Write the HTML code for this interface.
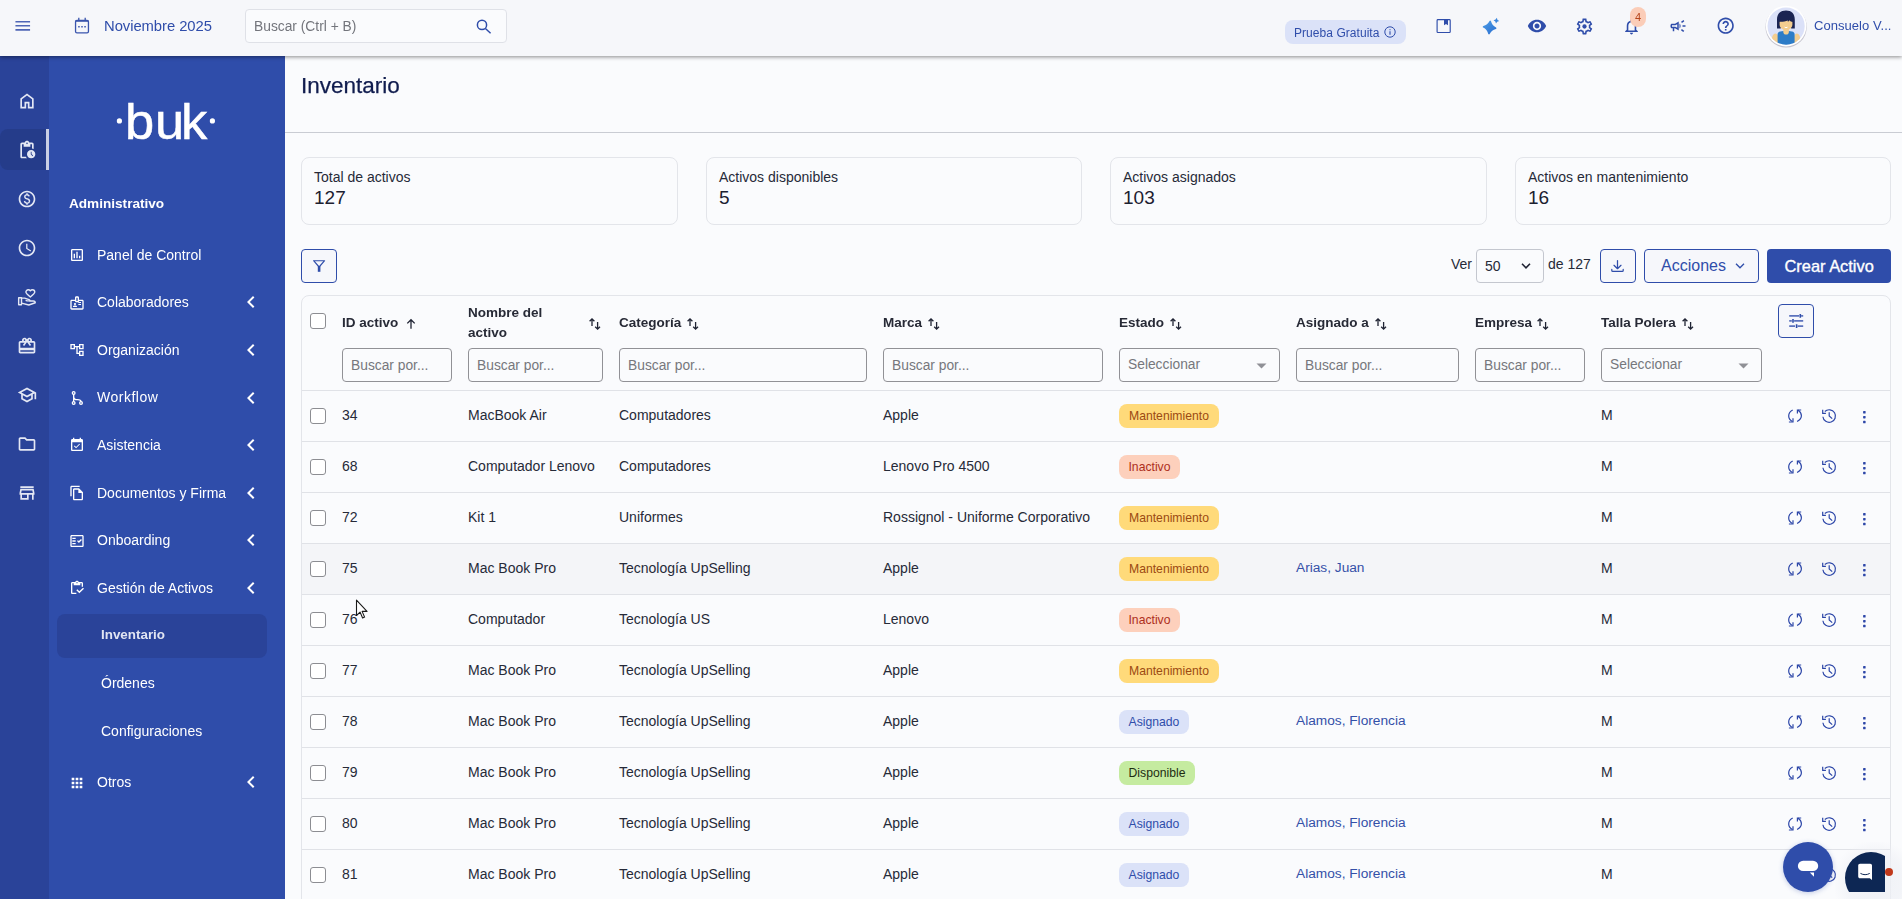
<!DOCTYPE html>
<html lang="es">
<head>
<meta charset="utf-8">
<title>Inventario</title>
<style>
*{box-sizing:border-box;margin:0;padding:0}
html,body{width:1902px;height:899px;overflow:hidden}
body{font-family:"Liberation Sans",sans-serif;background:#fafbfd;color:#1f2333;position:relative;font-size:14px}
.abs{position:absolute}
#top,#rail,#side,.th,.gs{will-change:transform}
svg{display:block}
#top{position:absolute;left:0;top:0;width:1902px;height:56px;background:#f6f7fa;box-shadow:0 1px 4px rgba(0,0,0,.45);z-index:30}
#top .t{position:absolute;white-space:nowrap;color:#2f4daa}
#rail{position:absolute;left:0;top:56px;width:49px;height:843px;background:#2a4399;z-index:10}
#side{position:absolute;left:49px;top:56px;width:236px;height:843px;background:#2f4daa;z-index:10;color:#fff}
#side .t{position:absolute;white-space:nowrap;color:#fff}
#main{position:absolute;left:285px;top:56px;width:1617px;height:843px;background:#fafbfd;overflow:hidden}
#main .t{position:absolute;white-space:nowrap}
.th{font-size:13.5px;line-height:18px;font-weight:700;color:#272a36}
.td{font-size:14px;line-height:18px;color:#262a38}
.ph{font-size:13.8px;line-height:18px;color:#76777c}
.inp{position:absolute;height:34px;border:1px solid #919196;border-radius:4px;background:#fafbfd}
.cb{position:absolute;width:16px;height:16px;border:1px solid #8c8d92;border-radius:3px;background:#fff}
.ln{position:absolute;height:1px;background:#e0e2e7}
.bd{position:absolute;height:24px;border-radius:8px;font-size:12.2px;line-height:24px;text-align:center;white-space:nowrap}
.btn{position:absolute;height:34px;border:1px solid #2f4daa;border-radius:4px;background:#f6f7fb}
</style>
</head>
<body>
<div id="top">
<svg class="abs" style="left:12.9px;top:16.2px" width="19.5" height="19.5" viewBox="0 0 24 24" fill="#4f66b5"><path d="M3 18h18v-2H3v2zm0-5h18v-2H3v2zm0-7v2h18V6H3z"/></svg>
<svg class="abs" style="left:73px;top:16px" width="18" height="19" viewBox="0 0 18 19" fill="none" stroke="#3a55ad" stroke-width="1.3"><rect x="2.550" y="4.300" width="12.900" height="12.500" rx="1.400"/><path d="M2.550 5h12.900" stroke-width="1.600"/><path d="M5.800 1.800v3M12.200 1.800v3"/><path d="M5.200 10.700h1.500M8.250 10.700h1.500M11.300 10.700h1.500" stroke-width="1.500"/></svg>
<div class="t" style="left:104px;top:17px;font-size:14.8px;line-height:18px;letter-spacing:-.05px">Noviembre 2025</div>
<div class="abs" style="left:245px;top:9px;width:262px;height:34px;border:1px solid #dfe1e7;border-radius:4px;background:#fafbfd"></div>
<div class="t" style="left:254px;top:18px;font-size:13.8px;line-height:18px;color:#73757c">Buscar (Ctrl + B)</div>
<svg class="abs" style="left:474px;top:16.500px" width="20" height="20" viewBox="0 0 20 20" fill="none" stroke="#2f4daa" stroke-width="1.500"><circle cx="8" cy="7.900" r="4.600"/><path d="M11.400 11.500l5.200 4.700"/></svg>
<div class="abs" style="left:1285px;top:20px;width:121px;height:24px;border-radius:8px;background:#dbe2f8"></div>
<div class="t" style="left:1294px;top:25.500px;font-size:12px;line-height:14px;letter-spacing:.05px">Prueba Gratuita</div>
<svg class="abs" style="left:1384px;top:26px" width="12" height="12" viewBox="0 0 12 12" fill="none" stroke="#2f4daa" stroke-width="1"><circle cx="6" cy="6" r="5.2"/><path d="M6 5.3v3.4M6 3.2v1.1" stroke-width="1.1"/></svg>
<svg class="abs" style="left:1435px;top:18px" width="17" height="16" viewBox="0 0 17 16" fill="none" stroke="#2f4daa" stroke-width="1.150"><rect x="2.100" y="1.600" width="13.100" height="12.900" rx=".8"/><path d="M9 1.600h4v5.700l-2-1.400-2 1.400z" fill="#2f4daa" stroke="none"/></svg>
<svg class="abs" style="left:1481px;top:16px" width="20" height="20" viewBox="0 0 20 20"><defs><linearGradient id="spg" x1="0" y1="0" x2="1" y2="1"><stop offset="0" stop-color="#4a9be6"/><stop offset="1" stop-color="#2a6fd0"/></linearGradient></defs><path d="M8.60 5.40Q10.25 9.85 14.70 11.50Q10.25 13.15 8.60 17.60Q6.95 13.15 2.50 11.50Q6.95 9.85 8.60 5.40Z" fill="url(#spg)" stroke="url(#spg)" stroke-width="1.600" stroke-linejoin="round" transform="rotate(6 8.600 11.500)"/><path d="M15.40 1.80Q15.84 4.26 18.30 4.70Q15.84 5.13 15.40 7.60Q14.97 5.13 12.50 4.70Q14.97 4.26 15.40 1.80Z" fill="#3b86dc" transform="rotate(8 15.400 4.700)"/></svg>
<svg class="abs" style="left:1527px;top:16px" width="20" height="20" viewBox="0 0 24 24" fill="#2f4daa"><path d="M12 4.500C7 4.500 2.730 7.610 1 12c1.730 4.390 6 7.500 11 7.500s9.270-3.110 11-7.500c-1.730-4.390-6-7.500-11-7.500zM12 17c-2.760 0-5-2.240-5-5s2.240-5 5-5 5 2.240 5 5-2.240 5-5 5zm0-8c-1.660 0-3 1.340-3 3s1.340 3 3 3 3-1.340 3-3-1.340-3-3-3z"/></svg>
<svg class="abs" style="left:1575px;top:16.500px" width="19" height="19" viewBox="0 0 24 24" fill="#2f4daa"><path d="M19.430 12.980c.04-.32.07-.64.07-.98 0-.34-.03-.66-.07-.98l2.110-1.650c.19-.15.24-.42.12-.64l-2-3.460c-.09-.16-.26-.25-.44-.25-.06 0-.12.010-.17.030l-2.490 1c-.52-.4-1.080-.73-1.690-.98l-.38-2.650C14.460 2.180 14.250 2 14 2h-4c-.25 0-.46.18-.49.42l-.38 2.650c-.61.25-1.170.59-1.690.98l-2.490-1c-.06-.02-.12-.03-.18-.03-.17 0-.34.09-.43.25l-2 3.460c-.13.22-.07.49.12.64l2.110 1.650c-.04.32-.07.65-.07.98 0 .33.03.66.07.98l-2.110 1.650c-.19.15-.24.42-.12.64l2 3.460c.09.16.26.25.44.25.06 0 .12-.010.17-.030l2.490-1c.52.4 1.080.73 1.690.98l.38 2.650c.03.24.24.42.49.42h4c.25 0 .46-.18.49-.42l.38-2.650c.61-.25 1.170-.59 1.690-.98l2.490 1c.06.02.12.03.18.03.17 0 .34-.09.43-.25l2-3.460c.12-.22.07-.49-.12-.64l-2.110-1.650zm-1.980-1.710c.04.31.05.52.05.73 0 .21-.02.43-.05.73l-.14 1.130.89.7 1.080.84-.7 1.210-1.270-.51-1.040-.42-.9.68c-.43.32-.84.56-1.250.73l-1.060.43-.16 1.130-.2 1.350h-1.400l-.19-1.350-.16-1.130-1.060-.43c-.43-.18-.83-.41-1.230-.71l-.91-.7-1.060.43-1.270.51-.7-1.210 1.080-.84.89-.7-.14-1.130c-.03-.31-.05-.54-.05-.74s.02-.43.05-.73l.14-1.130-.89-.7-1.080-.84.7-1.210 1.270.51 1.040.42.9-.68c.43-.32.84-.56 1.250-.73l1.060-.43.16-1.130.2-1.350h1.390l.19 1.350.16 1.130 1.060.43c.43.18.83.41 1.230.71l.91.7 1.060-.43 1.270-.51.7 1.210-1.070.85-.89.7.14 1.130z"/><circle cx="12" cy="12" r="2.700"/></svg>
<svg class="abs" style="left:1621.900px;top:16.600px" width="19" height="19" viewBox="0 0 24 24" fill="#2f4daa"><path d="M12 22c1.100 0 2-.9 2-2h-4c0 1.100.9 2 2 2zm6-6v-5c0-3.070-1.630-5.640-4.500-6.320V4c0-.83-.67-1.500-1.500-1.500s-1.500.67-1.500 1.500v.68C7.640 5.360 6 7.920 6 11v5l-2 2v1h16v-1l-2-2zm-2 1H8v-6c0-2.480 1.510-4.500 4-4.500s4 2.020 4 4.500v6z"/></svg>
<div class="abs" style="left:1630px;top:7px;width:16px;height:19.500px;border-radius:8px;background:#fbcdb8;color:#b5451b;font-size:11px;line-height:20px;text-align:center">4</div>
<svg class="abs" style="left:1669px;top:17px" width="18" height="18" viewBox="0 0 24 24" fill="#2f4daa"><path d="M18 11v2h4v-2h-4zm-2 6.610c.96.71 2.210 1.650 3.200 2.390.4-.53.8-1.070 1.200-1.600-.99-.74-2.240-1.680-3.200-2.400-.4.54-.8 1.080-1.200 1.610zM20.400 5.600c-.4-.53-.8-1.070-1.200-1.600-.99.74-2.240 1.680-3.200 2.400.4.53.8 1.070 1.200 1.600.96-.72 2.210-1.650 3.200-2.400zM4 9c-1.100 0-2 .9-2 2v2c0 1.100.9 2 2 2h1v4h2v-4h1l5 3V6L8 9H4zm5.030 1.710L11 9.530v4.940l-1.970-1.180-.48-.29H4v-2h4.550l.48-.29zM15.500 12c0-1.330-.58-2.530-1.500-3.350v6.690c.92-.81 1.500-2.010 1.500-3.340z"/></svg>
<svg class="abs" style="left:1715.800px;top:16.400px" width="19.400" height="19.400" viewBox="0 0 24 24" fill="#2f4daa"><path d="M11 18h2v-2h-2v2zm1-16C6.480 2 2 6.480 2 12s4.480 10 10 10 10-4.480 10-10S17.520 2 12 2zm0 18c-4.410 0-8-3.590-8-8s3.590-8 8-8 8 3.590 8 8-3.590 8-8 8zm0-14c-2.210 0-4 1.790-4 4h2c0-1.100.9-2 2-2s2 .9 2 2c0 2-3 1.750-3 5h2c0-2.250 3-2.500 3-5 0-2.210-1.790-4-4-4z"/></svg>
<svg class="abs" style="left:1762px;top:2px;overflow:visible" width="48" height="48" viewBox="0 0 48 48"><defs><clipPath id="avc"><circle cx="24.100" cy="24.100" r="18.600"/></clipPath></defs><circle cx="24.100" cy="25" r="20.600" fill="rgba(70,60,90,.28)"/><circle cx="24.100" cy="24.100" r="20.300" fill="#fff"/><circle cx="24.100" cy="24.100" r="18.600" fill="#dbe1f8"/><g clip-path="url(#avc)"><ellipse cx="13.300" cy="38" rx="3.600" ry="6.500" fill="#f3cd8f"/><ellipse cx="34.900" cy="38" rx="3.600" ry="6.500" fill="#f3cd8f"/><path d="M15.600 45V32.500c0-1.500 1-2.600 2.600-2.900l3.300-.5h5.200l3.300.5c1.600.3 2.600 1.400 2.600 2.900V45z" fill="#2d7cc7"/><path d="M21.300 26h5.600v4c0 1.600-1.200 2.600-2.800 2.600s-2.800-1-2.800-2.600z" fill="#f3cd8f"/><path d="M15 26.400V17.500c0-5.600 3.600-8.900 9-8.900s8.800 3.300 8.800 8.900v8.900h-3.600l-1-6h-8.500l-1 6z" fill="#1b2452"/><path d="M17.600 20c0-2 2.700-3.300 6.400-3.300s6.400 1.300 6.400 3.300v2.400c0 3.200-2.800 5.400-6.400 5.400s-6.400-2.200-6.400-5.400z" fill="#f3cd8f"/><path d="M16.500 19.800c0-5.200 3-7.700 7.500-7.700s7.500 2.500 7.500 7.700c-1.600.2-3.200-.3-4.100-1.500-.3.800-.9 1.300-1.600 1.500v-1.200c-2.200 1-5.600 1.400-9.300 1.200z" fill="#1b2452"/><path d="M22.300 24.500c1.100.7 2.500.7 3.600 0-.3 1-1 1.500-1.800 1.500s-1.500-.5-1.800-1.500z" fill="#fff"/></g></svg>
<div class="t" style="left:1814px;top:18px;font-size:13px;line-height:16px;letter-spacing:.05px">Consuelo V...</div>
</div>
<div id="rail">
<div class="abs" style="left:0;top:73px;width:49px;height:41px;background:#253c8a;border-radius:8px 0 0 8px"></div><div class="abs" style="left:46px;top:73px;width:3px;height:41px;background:#c9cfe4"></div>
<svg class="abs" style="left:16.85px;top:35.2px" width="20" height="20" viewBox="0 0 24 24" fill="#e4e8f4"><path d="M6 19h3v-6h6v6h3v-9l-6-4.500L6 10v9zm-2 2V9l8-6 8 6v12h-7v-6h-2v6H4z"/></svg>
<svg class="abs" style="left:17.0px;top:84.0px" width="20" height="20" viewBox="0 0 24 24" fill="#e4e8f4"><path d="M17 12c-2.760 0-5 2.240-5 5s2.240 5 5 5 5-2.240 5-5-2.240-5-5-5zm1.650 7.350L16.500 17.200V14h1v2.790l1.850 1.850-.7.71zM18 3h-3.180C14.400 1.840 13.300 1 12 1s-2.400.84-2.820 2H6c-1.100 0-2 .9-2 2v15c0 1.100.9 2 2 2h6.110c-.59-.57-1.070-1.250-1.420-2H6V5h2v3h8V5h2v5.080c.71.1 1.380.31 2 .6V5c0-1.100-.9-2-2-2zm-6 2c-.55 0-1-.45-1-1s.45-1 1-1 1 .45 1 1-.45 1-1 1z"/></svg>
<svg class="abs" style="left:17.0px;top:133.0px" width="20" height="20" viewBox="0 0 24 24" fill="#e4e8f4"><path d="M12 2C6.480 2 2 6.480 2 12s4.480 10 10 10 10-4.480 10-10S17.520 2 12 2zm0 18c-4.410 0-8-3.590-8-8s3.590-8 8-8 8 3.590 8 8-3.590 8-8 8zm.89-8.900c-1.780-.59-2.640-.96-2.640-1.900 0-1.020 1.110-1.390 1.810-1.390 1.310 0 1.790.99 1.900 1.340l1.580-.67c-.15-.44-.82-1.910-2.660-2.230V5h-1.750v1.260c-2.600.56-2.620 2.850-2.620 2.960 0 2.270 2.250 2.910 3.350 3.310 1.580.56 2.280 1.070 2.280 2.030 0 1.130-1.050 1.610-1.980 1.610-1.820 0-2.340-1.870-2.400-2.090l-1.660.67c.63 2.190 2.280 2.780 3.020 2.960V19h1.750v-1.240c.52-.09 3.020-.59 3.020-3.220.01-1.390-.6-2.610-3-3.440z"/></svg>
<svg class="abs" style="left:17.0px;top:182.0px" width="20" height="20" viewBox="0 0 24 24" fill="#e4e8f4"><path d="M11.990 2C6.470 2 2 6.480 2 12s4.470 10 9.990 10C17.520 22 22 17.520 22 12S17.520 2 11.990 2zM12 20c-4.420 0-8-3.580-8-8s3.580-8 8-8 8 3.580 8 8-3.580 8-8 8zm.5-13H11v6l5.250 3.150.75-1.230-4.500-2.670z"/></svg>
<svg class="abs" style="left:17.0px;top:231.0px" width="20" height="20" viewBox="0 0 24 24" fill="#e4e8f4"><g fill="none" stroke="#e4e8f4" stroke-width="1.700" stroke-linejoin="round"><path d="M16 4.600c.6-.8 1.500-1.300 2.500-1.300 1.600 0 2.800 1.200 2.800 2.800 0 1.800-2.200 3.500-5.300 5.900-3.100-2.400-5.300-4.100-5.300-5.900 0-1.600 1.200-2.800 2.800-2.800 1 0 1.900.5 2.500 1.300z"/><rect x="2" y="12.800" width="3.400" height="8.400"/><path d="M5.400 13.300h3.800l5.300 1.900c.7.25 1.100.8 1.100 1.500h4c1.300 0 2.300.9 2.300 2.200L14.200 21.600l-8.800-2.300"/><path d="M15.600 16.700h-3.400l-1.900-.7" stroke-width="1.500"/></g></svg>
<svg class="abs" style="left:17.0px;top:280.0px" width="20" height="20" viewBox="0 0 24 24" fill="#e4e8f4"><path d="M20 6h-2.180c.11-.31.18-.65.18-1 0-1.660-1.340-3-3-3-1.050 0-1.960.54-2.500 1.350l-.5.67-.5-.68C10.960 2.540 10.050 2 9 2 7.340 2 6 3.340 6 5c0 .35.07.69.18 1H4c-1.110 0-1.990.89-1.990 2L2 19c0 1.110.89 2 2 2h16c1.110 0 2-.89 2-2V8c0-1.110-.89-2-2-2zm-5-2c.55 0 1 .45 1 1s-.45 1-1 1-1-.45-1-1 .45-1 1-1zM9 4c.55 0 1 .45 1 1s-.45 1-1 1-1-.45-1-1 .45-1 1-1zm11 15H4v-2h16v2zm0-5H4V8h5.080L7 10.830 8.620 12 11 8.760l1-1.360 1 1.360L15.380 12 17 10.830 14.920 8H20v6z"/></svg>
<svg class="abs" style="left:17.0px;top:329.0px" width="20" height="20" viewBox="0 0 24 24" fill="#e4e8f4"><path d="M12 3L1 9l4 2.180v6L12 21l7-3.820v-6l2-1.090V17h2V9L12 3zm6.820 6L12 12.720 5.180 9 12 5.280 18.820 9zM17 15.990l-5 2.730-5-2.730v-3.720L12 15l5-2.730v3.720z"/></svg>
<svg class="abs" style="left:17.0px;top:378.0px" width="20" height="20" viewBox="0 0 24 24" fill="#e4e8f4"><path d="M9.170 6l2 2H20v10H4V6h5.170M10 4H4c-1.100 0-1.990.9-1.990 2L2 18c0 1.100.9 2 2 2h16c1.100 0 2-.9 2-2V8c0-1.100-.9-2-2-2h-8l-2-2z"/></svg>
<svg class="abs" style="left:17.0px;top:427.0px" width="20" height="20" viewBox="0 0 24 24" fill="#e4e8f4"><path d="M18.360 9l.6 3H5.040l.6-3h12.720M20 4H4v2h16V4zm0 3H4l-1 5v2h1v6h10v-6h4v6h2v-6h1v-2l-1-5zM6 18v-4h6v4H6z"/></svg>
</div>
<div id="side">
<svg class="abs" style="left:60px;top:36px;overflow:visible" width="112" height="56" viewBox="0 0 112 56"><circle cx="10.4" cy="28.9" r="2.6" fill="#fff"/><circle cx="103.4" cy="28.9" r="2.6" fill="#fff"/><text transform="scale(1.04 1)" x="15.27 44.19 69.26" y="47" font-family="Liberation Sans, sans-serif" font-size="50.5" fill="#fff" stroke="#fff" stroke-width=".5">buk</text></svg>
<div class="t" style="left:20px;top:139px;font-size:13.600px;line-height:18px;font-weight:700">Administrativo</div>
<svg class="abs" style="left:19.7px;top:191.3px" width="16" height="16" viewBox="0 0 24 24" fill="#fff"><path d="M19 3H5c-1.100 0-2 .9-2 2v14c0 1.100.9 2 2 2h14c1.100 0 2-.9 2-2V5c0-1.100-.9-2-2-2zm0 16H5V5h14v14zM7 10h2v7H7zm4-3h2v10h-2zm4 6h2v4h-2z"/></svg><div class="t" style="left:48px;top:189.8px;font-size:14px;line-height:18px">Panel de Control</div>
<svg class="abs" style="left:19.7px;top:238.7px" width="16" height="16" viewBox="0 0 24 24" fill="#fff"><path d="M14 13.500h4V15h-4zM14 10.500h4V12h-4zM20 7h-5V4c0-1.100-.9-2-2-2h-2c-1.100 0-2 .9-2 2v3H4c-1.100 0-2 .9-2 2v11c0 1.100.9 2 2 2h16c1.100 0 2-.9 2-2V9c0-1.100-.9-2-2-2zm-9-3h2v5h-2V4zm9 16H4V9h5c0 1.100.9 2 2 2h2c1.100 0 2-.9 2-2h5v11zM9 15c.83 0 1.500-.67 1.500-1.500S9.830 12 9 12s-1.500.67-1.500 1.500S8.170 15 9 15zm2.080 1.180C10.440 15.900 9.740 15.750 9 15.750s-1.440.15-2.080.43c-.56.24-.92.78-.92 1.390V18h6v-.43c0-.61-.36-1.150-.92-1.390z"/></svg><div class="t" style="left:48px;top:237.2px;font-size:14px;line-height:18px">Colaboradores</div><svg class="abs" style="left:189.9px;top:234.39999999999998px" width="24" height="24" viewBox="0 0 24 24" fill="#fff"><path d="M15.410 7.410L14 6l-6 6 6 6 1.410-1.410L10.830 12z"/></svg>
<svg class="abs" style="left:19.7px;top:286.3px" width="16" height="16" viewBox="0 0 24 24" fill="#fff"><path d="M22 11V3h-7v3H9V3H2v8h7V8h2v10h4v3h7v-8h-7v3h-2V8h2v3h7zM7 9H4V5h3v4zm10 6h3v4h-3v-4zm0-10h3v4h-3V5z"/></svg><div class="t" style="left:48px;top:284.8px;font-size:14px;line-height:18px">Organización</div><svg class="abs" style="left:189.9px;top:282px" width="24" height="24" viewBox="0 0 24 24" fill="#fff"><path d="M15.410 7.410L14 6l-6 6 6 6 1.410-1.410L10.830 12z"/></svg>
<svg class="abs" style="left:19.7px;top:333.8px" width="16" height="16" viewBox="0 0 24 24" fill="#fff"><g fill="none" stroke="#fff" stroke-width="2"><circle cx="7" cy="4.500" r="2"/><circle cx="7" cy="19.500" r="2"/><circle cx="18" cy="19.500" r="2"/><path d="M7 6.500v11M7 10c0 3 2 4.500 5.500 4.500S18 15.500 18 17.500"/></g></svg><div class="t" style="left:48px;top:332.3px;font-size:14px;line-height:18px;letter-spacing:.5px">Workflow</div><svg class="abs" style="left:189.9px;top:329.5px" width="24" height="24" viewBox="0 0 24 24" fill="#fff"><path d="M15.410 7.410L14 6l-6 6 6 6 1.410-1.410L10.830 12z"/></svg>
<svg class="abs" style="left:19.7px;top:381.4px" width="16" height="16" viewBox="0 0 24 24" fill="#fff"><path d="M16.530 11.060L15.470 10l-4.880 4.880-2.120-2.120-1.060 1.060L10.590 17l5.940-5.940zM19 3h-1V1h-2v2H8V1H6v2H5c-1.110 0-1.990.9-1.990 2L3 19c0 1.100.89 2 2 2h14c1.100 0 2-.9 2-2V5c0-1.100-.9-2-2-2zm0 16H5V8h14v11z"/></svg><div class="t" style="left:48px;top:379.9px;font-size:14px;line-height:18px">Asistencia</div><svg class="abs" style="left:189.9px;top:377.1px" width="24" height="24" viewBox="0 0 24 24" fill="#fff"><path d="M15.410 7.410L14 6l-6 6 6 6 1.410-1.410L10.830 12z"/></svg>
<svg class="abs" style="left:19.7px;top:429.1px" width="16" height="16" viewBox="0 0 24 24" fill="#fff"><path d="M16 1H4c-1.100 0-2 .9-2 2v14h2V3h12V1zm-1 4H8c-1.100 0-1.990.9-1.990 2L6 21c0 1.100.89 2 1.990 2H19c1.100 0 2-.9 2-2V11l-6-6zM8 21V7h6v5h5v9H8z"/></svg><div class="t" style="left:48px;top:427.6px;font-size:14px;line-height:18px">Documentos y Firma</div><svg class="abs" style="left:189.9px;top:424.8px" width="24" height="24" viewBox="0 0 24 24" fill="#fff"><path d="M15.410 7.410L14 6l-6 6 6 6 1.410-1.410L10.830 12z"/></svg>
<svg class="abs" style="left:19.7px;top:476.6px" width="16" height="16" viewBox="0 0 24 24" fill="#fff"><path d="M20 3H4c-1.100 0-2 .9-2 2v14c0 1.100.9 2 2 2h16c1.100 0 2-.9 2-2V5c0-1.100-.9-2-2-2zm0 16H4V5h16v14z"/><path d="M19.410 10.420L17.990 9l-3.170 3.170-1.410-1.420L12 12.160 14.820 15z"/><path d="M5 7h5v2H5zM5 11h5v2H5zM5 15h5v2H5z"/></svg><div class="t" style="left:48px;top:475.1px;font-size:14px;line-height:18px">Onboarding</div><svg class="abs" style="left:189.9px;top:472.29999999999995px" width="24" height="24" viewBox="0 0 24 24" fill="#fff"><path d="M15.410 7.410L14 6l-6 6 6 6 1.410-1.410L10.830 12z"/></svg>
<svg class="abs" style="left:19.7px;top:524.3px" width="16" height="16" viewBox="0 0 24 24" fill="#fff"><path d="M5 5h2v3h10V5h2v5h2V5c0-1.100-.9-2-2-2h-4.180C14.400 1.840 13.300 1 12 1S9.600 1.840 9.180 3H5c-1.100 0-2 .9-2 2v14c0 1.100.9 2 2 2h6v-2H5V5zm7-2c.55 0 1 .45 1 1s-.45 1-1 1-1-.45-1-1 .45-1 1-1z"/><path d="M21 11.500l-5.510 5.520-3.010-3.020-1.500 1.500 4.510 4.500 7-7z"/></svg><div class="t" style="left:48px;top:522.8px;font-size:14px;line-height:18px">Gestión de Activos</div><svg class="abs" style="left:189.9px;top:520px" width="24" height="24" viewBox="0 0 24 24" fill="#fff"><path d="M15.410 7.410L14 6l-6 6 6 6 1.410-1.410L10.830 12z"/></svg>
<svg class="abs" style="left:19.7px;top:718.6px" width="16" height="16" viewBox="0 0 24 24" fill="#fff"><path d="M4 8h4V4H4v4zm6 12h4v-4h-4v4zm-6 0h4v-4H4v4zm0-6h4v-4H4v4zm6 0h4v-4h-4v4zm6-10v4h4V4h-4zm-6 4h4V4h-4v4zm6 6h4v-4h-4v4zm0 6h4v-4h-4v4z"/></svg><div class="t" style="left:48px;top:717.1px;font-size:14px;line-height:18px">Otros</div><svg class="abs" style="left:189.9px;top:714.3px" width="24" height="24" viewBox="0 0 24 24" fill="#fff"><path d="M15.410 7.410L14 6l-6 6 6 6 1.410-1.410L10.830 12z"/></svg>
<div class="abs" style="left:8px;top:558px;width:210px;height:44px;border-radius:8px;background:#2a4399"></div>
<div class="t" style="left:52px;top:569.500px;font-size:13.400px;line-height:18px;font-weight:700;color:#e1e5f2">Inventario</div>
<div class="t" style="left:52px;top:617.500px;font-size:14px;line-height:18px">Órdenes</div>
<div class="t" style="left:52px;top:666px;font-size:14px;line-height:18px">Configuraciones</div>
</div>
<div id="main">
<div class="t gs" style="left:16px;top:16px;font-size:22.5px;line-height:28px;color:#101c4e;-webkit-text-stroke:.25px #101c4e">Inventario</div>
<div class="abs" style="left:0;top:76px;width:1617px;height:1px;background:#c9ccd3"></div>
<div class="abs" style="left:16px;top:101px;width:376.5px;height:68px;border:1px solid #e3e5ea;border-radius:8px;background:#fafbfd"></div><div class="t td" style="left:29px;top:112px">Total de activos</div><div class="t" style="left:29px;top:130.5px;font-size:19px;line-height:22px;color:#1c2030">127</div>
<div class="abs" style="left:420.5px;top:101px;width:376.5px;height:68px;border:1px solid #e3e5ea;border-radius:8px;background:#fafbfd"></div><div class="t td" style="left:434px;top:112px">Activos disponibles</div><div class="t" style="left:434px;top:130.5px;font-size:19px;line-height:22px;color:#1c2030">5</div>
<div class="abs" style="left:825px;top:101px;width:376.5px;height:68px;border:1px solid #e3e5ea;border-radius:8px;background:#fafbfd"></div><div class="t td" style="left:838px;top:112px">Activos asignados</div><div class="t" style="left:838px;top:130.5px;font-size:19px;line-height:22px;color:#1c2030">103</div>
<div class="abs" style="left:1229.5px;top:101px;width:376.5px;height:68px;border:1px solid #e3e5ea;border-radius:8px;background:#fafbfd"></div><div class="t td" style="left:1243px;top:112px">Activos en mantenimiento</div><div class="t" style="left:1243px;top:130.5px;font-size:19px;line-height:22px;color:#1c2030">16</div>
<div class="btn" style="left:16px;top:193px;width:36px"></div><svg class="abs" style="left:26px;top:202px" width="18" height="16" viewBox="0 0 18 16" fill="none" stroke="#2f4daa" stroke-width="1.5" stroke-linejoin="round"><path d="M2.600 2.700h11l-5.500 6.300z" stroke-width="1.150"/><rect x="6.800" y="8.200" width="2.600" height="5.600" fill="#2f4daa" stroke="none"/></svg>
<div class="t td" style="left:1166px;top:199.4px">Ver</div><div class="abs" style="left:1191px;top:193px;width:68px;height:34px;border:1px solid #c4c7cf;border-radius:4px;background:#fafbfd"></div><div class="t td" style="left:1200px;top:201px">50</div><svg class="abs" style="left:1235px;top:206px" width="12" height="8" viewBox="0 0 12 8" fill="none" stroke="#1f2333" stroke-width="1.6"><path d="M2 1.800l4 4 4-4"/></svg><div class="t td" style="left:1263px;top:199.4px">de 127</div>
<div class="btn" style="left:1315px;top:193px;width:36px"></div><svg class="abs" style="left:1325px;top:202px" width="16" height="16" viewBox="0 0 16 16" fill="none" stroke="#2f4daa" stroke-width="1.25" stroke-linecap="round" stroke-linejoin="round"><path d="M7.500 2.500v8M4 7.300l3.500 3.400L11 7.300M1.800 11.400v1c0 .6.400 1 1 1h9.400c.6 0 1-.4 1-1v-1"/></svg>
<div class="btn" style="left:1359px;top:193px;width:115px"></div><div class="t" style="left:1376px;top:200px;font-size:16px;line-height:20px;color:#2f4daa">Acciones</div><svg class="abs" style="left:1449px;top:206px" width="12" height="8" viewBox="0 0 12 8" fill="none" stroke="#2f4daa" stroke-width="1.3"><path d="M2 1.800l4 4 4-4"/></svg>
<div class="abs" style="left:1482px;top:193px;width:124px;height:34px;border-radius:4px;background:#2f4daa"></div><div class="t" style="left:1499.5px;top:200px;font-size:16.4px;line-height:20px;color:#fff;-webkit-text-stroke:.35px #fff">Crear Activo</div>
<div class="abs" style="left:16px;top:239px;width:1590px;height:700px;border:1px solid #e3e5ea;border-radius:8px;background:#fafbfd"></div>
<div class="abs" style="left:17px;top:488px;width:1588px;height:50px;background:#f4f5f8"></div>
<div class="ln" style="left:17px;top:334px;width:1588px"></div><div class="ln" style="left:17px;top:385px;width:1588px"></div><div class="ln" style="left:17px;top:436px;width:1588px"></div><div class="ln" style="left:17px;top:487px;width:1588px"></div><div class="ln" style="left:17px;top:538px;width:1588px"></div><div class="ln" style="left:17px;top:589px;width:1588px"></div><div class="ln" style="left:17px;top:640px;width:1588px"></div><div class="ln" style="left:17px;top:691px;width:1588px"></div><div class="ln" style="left:17px;top:742px;width:1588px"></div><div class="ln" style="left:17px;top:793px;width:1588px"></div>
<div class="cb" style="left:25px;top:257px"></div><div class="t th" style="left:57px;top:257.5px">ID activo</div><svg class="abs" style="left:119.5px;top:261px" width="12" height="13" viewBox="0 0 12 13" fill="none" stroke="#1f2333" stroke-width="1.3"><path d="M6 11.800V2.800M2.300 6.400L6 2.700l3.700 3.700"/></svg><div class="t th" style="left:183px;top:247.5px">Nombre del</div><div class="t th" style="left:183px;top:267.5px">activo</div><svg class="abs" style="left:303px;top:261px" width="14" height="14" viewBox="0 0 14 14" fill="none" stroke="#1f2333" stroke-width="1.3"><path d="M4 9V2M1.600 4.300L4 1.900l2.400 2.400M9.600 5v7M7.200 9.700l2.400 2.400 2.400-2.400"/></svg><div class="t th" style="left:334px;top:257.5px">Categoría</div><svg class="abs" style="left:401px;top:261px" width="14" height="14" viewBox="0 0 14 14" fill="none" stroke="#1f2333" stroke-width="1.3"><path d="M4 9V2M1.600 4.300L4 1.900l2.400 2.400M9.600 5v7M7.200 9.700l2.400 2.400 2.400-2.400"/></svg><div class="t th" style="left:598px;top:257.5px">Marca</div><svg class="abs" style="left:641.5px;top:261px" width="14" height="14" viewBox="0 0 14 14" fill="none" stroke="#1f2333" stroke-width="1.3"><path d="M4 9V2M1.600 4.300L4 1.900l2.400 2.400M9.600 5v7M7.200 9.700l2.400 2.400 2.400-2.400"/></svg><div class="t th" style="left:834px;top:257.5px">Estado</div><svg class="abs" style="left:884px;top:261px" width="14" height="14" viewBox="0 0 14 14" fill="none" stroke="#1f2333" stroke-width="1.3"><path d="M4 9V2M1.600 4.300L4 1.900l2.400 2.400M9.600 5v7M7.200 9.700l2.400 2.400 2.400-2.400"/></svg><div class="t th" style="left:1011px;top:257.5px">Asignado a</div><svg class="abs" style="left:1089px;top:261px" width="14" height="14" viewBox="0 0 14 14" fill="none" stroke="#1f2333" stroke-width="1.3"><path d="M4 9V2M1.600 4.300L4 1.900l2.400 2.400M9.600 5v7M7.200 9.700l2.400 2.400 2.400-2.400"/></svg><div class="t th" style="left:1190px;top:257.5px">Empresa</div><svg class="abs" style="left:1251px;top:261px" width="14" height="14" viewBox="0 0 14 14" fill="none" stroke="#1f2333" stroke-width="1.3"><path d="M4 9V2M1.600 4.300L4 1.900l2.400 2.400M9.600 5v7M7.200 9.700l2.400 2.400 2.400-2.400"/></svg><div class="t th" style="left:1316px;top:257.5px">Talla Polera</div><svg class="abs" style="left:1396px;top:261px" width="14" height="14" viewBox="0 0 14 14" fill="none" stroke="#1f2333" stroke-width="1.3"><path d="M4 9V2M1.600 4.300L4 1.900l2.400 2.400M9.600 5v7M7.200 9.700l2.400 2.400 2.400-2.400"/></svg>
<div class="btn" style="left:1493px;top:248px;width:36px"></div><svg class="abs" style="left:1502px;top:256px" width="18" height="18" viewBox="0 0 18 18" fill="none" stroke="#2f4daa" stroke-width="1.6"><path d="M2.200 3.900h9.900M14.100 3.900h2.100M2.200 8.900h2.600M7.100 8.900h9.100M2.200 14.100h5.800M10.600 14.100h5.600" stroke="#5b72bd"/><path d="M13.300 2.100v3.600M6 7.100v3.700M9.600 12.200v3.700"/></svg>
<div class="inp" style="left:57px;top:292px;width:110px"></div><div class="t ph" style="left:66px;top:300.5px">Buscar por...</div><div class="inp" style="left:183px;top:292px;width:135px"></div><div class="t ph" style="left:192px;top:300.5px">Buscar por...</div><div class="inp" style="left:334px;top:292px;width:248px"></div><div class="t ph" style="left:343px;top:300.5px">Buscar por...</div><div class="inp" style="left:598px;top:292px;width:220px"></div><div class="t ph" style="left:607px;top:300.5px">Buscar por...</div><div class="inp" style="left:834px;top:292px;width:161px"></div><div class="t ph" style="left:843px;top:299.5px">Seleccionar</div><svg class="abs" style="left:971px;top:306.5px" width="11" height="6" viewBox="0 0 11 6" fill="#8f9096"><path d="M.5.500h10l-5 5z"/></svg><div class="inp" style="left:1011px;top:292px;width:163px"></div><div class="t ph" style="left:1020px;top:300.5px">Buscar por...</div><div class="inp" style="left:1190px;top:292px;width:110px"></div><div class="t ph" style="left:1199px;top:300.5px">Buscar por...</div><div class="inp" style="left:1316px;top:292px;width:161px"></div><div class="t ph" style="left:1325px;top:299.5px">Seleccionar</div><svg class="abs" style="left:1453px;top:306.5px" width="11" height="6" viewBox="0 0 11 6" fill="#8f9096"><path d="M.5.500h10l-5 5z"/></svg>
<div class="cb" style="left:25px;top:351.8px"></div><div class="t td" style="left:57px;top:349.9px">34</div><div class="t td" style="left:183px;top:349.9px">MacBook Air</div><div class="t td" style="left:334px;top:349.9px">Computadores</div><div class="t td" style="left:598px;top:349.9px">Apple</div><div class="bd" style="left:834px;top:347.5px;width:100px;background:#ffda7a;color:#9c4a12">Mantenimiento</div><div class="t td" style="left:1316px;top:349.9px">M</div><svg class="abs" style="left:1502px;top:352px" width="16" height="16" viewBox="0 0 16 16"><g fill="none" stroke="#2c46a8" stroke-width="1.2"><path d="M5.700 2.100C3 3.600 1.700 5.600 1.700 7.900c0 2.100 1.200 4.100 3.700 5.700"/><path d="M1.900 14h4.100v-3.700"/><path d="M10.100 13.500c2.900-1.500 4.300-3.500 4.300-5.700 0-2.200-1.200-4.100-3.600-5.700"/><path d="M14.200 2h-3.800v3.600"/></g></svg><svg class="abs" style="left:1535px;top:352px" width="18" height="16" viewBox="0 0 18 16"><g fill="none" stroke="#2c46a8" stroke-width="1.2"><path d="M2.900 8.700a6.300 6.300 0 1 0 1.900-5.200"/><path d="M2.700 1.800v3.500h3.200"/><path d="M9.200 4.300v3.600l3 2.700"/></g></svg><svg class="abs" style="left:1577.7px;top:354.6px" width="3" height="13" viewBox="0 0 3 13"><g fill="#2c46a8"><rect x=".1" y="0" width="2.500" height="2.500" rx=".6"/><rect x=".1" y="4.900" width="2.500" height="2.500" rx=".6"/><rect x=".1" y="9.800" width="2.500" height="2.500" rx=".6"/></g></svg>
<div class="cb" style="left:25px;top:402.8px"></div><div class="t td" style="left:57px;top:400.9px">68</div><div class="t td" style="left:183px;top:400.9px">Computador Lenovo</div><div class="t td" style="left:334px;top:400.9px">Computadores</div><div class="t td" style="left:598px;top:400.9px">Lenovo Pro 4500</div><div class="bd" style="left:834px;top:398.5px;width:61px;background:#fdd0bc;color:#ad2f1c">Inactivo</div><div class="t td" style="left:1316px;top:400.9px">M</div><svg class="abs" style="left:1502px;top:403px" width="16" height="16" viewBox="0 0 16 16"><g fill="none" stroke="#2c46a8" stroke-width="1.2"><path d="M5.700 2.100C3 3.600 1.700 5.600 1.700 7.900c0 2.100 1.200 4.100 3.700 5.700"/><path d="M1.900 14h4.100v-3.700"/><path d="M10.100 13.500c2.900-1.500 4.300-3.500 4.300-5.700 0-2.200-1.200-4.100-3.600-5.700"/><path d="M14.200 2h-3.800v3.600"/></g></svg><svg class="abs" style="left:1535px;top:403px" width="18" height="16" viewBox="0 0 18 16"><g fill="none" stroke="#2c46a8" stroke-width="1.2"><path d="M2.900 8.700a6.300 6.300 0 1 0 1.900-5.200"/><path d="M2.700 1.800v3.500h3.200"/><path d="M9.200 4.300v3.600l3 2.700"/></g></svg><svg class="abs" style="left:1577.7px;top:405.6px" width="3" height="13" viewBox="0 0 3 13"><g fill="#2c46a8"><rect x=".1" y="0" width="2.500" height="2.500" rx=".6"/><rect x=".1" y="4.900" width="2.500" height="2.500" rx=".6"/><rect x=".1" y="9.800" width="2.500" height="2.500" rx=".6"/></g></svg>
<div class="cb" style="left:25px;top:453.8px"></div><div class="t td" style="left:57px;top:451.9px">72</div><div class="t td" style="left:183px;top:451.9px">Kit 1</div><div class="t td" style="left:334px;top:451.9px">Uniformes</div><div class="t td" style="left:598px;top:451.9px">Rossignol - Uniforme Corporativo</div><div class="bd" style="left:834px;top:449.5px;width:100px;background:#ffda7a;color:#9c4a12">Mantenimiento</div><div class="t td" style="left:1316px;top:451.9px">M</div><svg class="abs" style="left:1502px;top:454px" width="16" height="16" viewBox="0 0 16 16"><g fill="none" stroke="#2c46a8" stroke-width="1.2"><path d="M5.700 2.100C3 3.600 1.700 5.600 1.700 7.900c0 2.100 1.200 4.100 3.700 5.700"/><path d="M1.900 14h4.100v-3.700"/><path d="M10.100 13.500c2.900-1.500 4.300-3.500 4.300-5.700 0-2.200-1.200-4.100-3.600-5.700"/><path d="M14.200 2h-3.800v3.600"/></g></svg><svg class="abs" style="left:1535px;top:454px" width="18" height="16" viewBox="0 0 18 16"><g fill="none" stroke="#2c46a8" stroke-width="1.2"><path d="M2.900 8.700a6.300 6.300 0 1 0 1.900-5.200"/><path d="M2.700 1.800v3.500h3.200"/><path d="M9.200 4.300v3.600l3 2.700"/></g></svg><svg class="abs" style="left:1577.7px;top:456.6px" width="3" height="13" viewBox="0 0 3 13"><g fill="#2c46a8"><rect x=".1" y="0" width="2.500" height="2.500" rx=".6"/><rect x=".1" y="4.900" width="2.500" height="2.500" rx=".6"/><rect x=".1" y="9.800" width="2.500" height="2.500" rx=".6"/></g></svg>
<div class="cb" style="left:25px;top:504.8px"></div><div class="t td" style="left:57px;top:502.9px">75</div><div class="t td" style="left:183px;top:502.9px">Mac Book Pro</div><div class="t td" style="left:334px;top:502.9px">Tecnología UpSelling</div><div class="t td" style="left:598px;top:502.9px">Apple</div><div class="bd" style="left:834px;top:500.5px;width:100px;background:#ffda7a;color:#9c4a12">Mantenimiento</div><div class="t td" style="left:1011px;top:502.9px;color:#3450a8;font-size:13.7px">Arias, Juan</div><div class="t td" style="left:1316px;top:502.9px">M</div><svg class="abs" style="left:1502px;top:505px" width="16" height="16" viewBox="0 0 16 16"><g fill="none" stroke="#2c46a8" stroke-width="1.2"><path d="M5.700 2.100C3 3.600 1.700 5.600 1.700 7.900c0 2.100 1.200 4.100 3.700 5.700"/><path d="M1.900 14h4.100v-3.700"/><path d="M10.100 13.500c2.900-1.500 4.300-3.500 4.300-5.700 0-2.200-1.200-4.100-3.600-5.700"/><path d="M14.200 2h-3.800v3.600"/></g></svg><svg class="abs" style="left:1535px;top:505px" width="18" height="16" viewBox="0 0 18 16"><g fill="none" stroke="#2c46a8" stroke-width="1.2"><path d="M2.900 8.700a6.300 6.300 0 1 0 1.900-5.200"/><path d="M2.700 1.800v3.500h3.200"/><path d="M9.200 4.300v3.600l3 2.700"/></g></svg><svg class="abs" style="left:1577.7px;top:507.6px" width="3" height="13" viewBox="0 0 3 13"><g fill="#2c46a8"><rect x=".1" y="0" width="2.500" height="2.500" rx=".6"/><rect x=".1" y="4.900" width="2.500" height="2.500" rx=".6"/><rect x=".1" y="9.800" width="2.500" height="2.500" rx=".6"/></g></svg>
<div class="cb" style="left:25px;top:555.8px"></div><div class="t td" style="left:57px;top:553.9px">76</div><div class="t td" style="left:183px;top:553.9px">Computador</div><div class="t td" style="left:334px;top:553.9px">Tecnología US</div><div class="t td" style="left:598px;top:553.9px">Lenovo</div><div class="bd" style="left:834px;top:551.5px;width:61px;background:#fdd0bc;color:#ad2f1c">Inactivo</div><div class="t td" style="left:1316px;top:553.9px">M</div><svg class="abs" style="left:1502px;top:556px" width="16" height="16" viewBox="0 0 16 16"><g fill="none" stroke="#2c46a8" stroke-width="1.2"><path d="M5.700 2.100C3 3.600 1.700 5.600 1.700 7.900c0 2.100 1.200 4.100 3.700 5.700"/><path d="M1.900 14h4.100v-3.700"/><path d="M10.100 13.500c2.900-1.500 4.300-3.500 4.300-5.700 0-2.200-1.200-4.100-3.600-5.700"/><path d="M14.200 2h-3.800v3.600"/></g></svg><svg class="abs" style="left:1535px;top:556px" width="18" height="16" viewBox="0 0 18 16"><g fill="none" stroke="#2c46a8" stroke-width="1.2"><path d="M2.900 8.700a6.300 6.300 0 1 0 1.900-5.200"/><path d="M2.700 1.800v3.500h3.200"/><path d="M9.200 4.300v3.600l3 2.700"/></g></svg><svg class="abs" style="left:1577.7px;top:558.6px" width="3" height="13" viewBox="0 0 3 13"><g fill="#2c46a8"><rect x=".1" y="0" width="2.500" height="2.500" rx=".6"/><rect x=".1" y="4.900" width="2.500" height="2.500" rx=".6"/><rect x=".1" y="9.800" width="2.500" height="2.500" rx=".6"/></g></svg>
<div class="cb" style="left:25px;top:606.8px"></div><div class="t td" style="left:57px;top:604.9px">77</div><div class="t td" style="left:183px;top:604.9px">Mac Book Pro</div><div class="t td" style="left:334px;top:604.9px">Tecnología UpSelling</div><div class="t td" style="left:598px;top:604.9px">Apple</div><div class="bd" style="left:834px;top:602.5px;width:100px;background:#ffda7a;color:#9c4a12">Mantenimiento</div><div class="t td" style="left:1316px;top:604.9px">M</div><svg class="abs" style="left:1502px;top:607px" width="16" height="16" viewBox="0 0 16 16"><g fill="none" stroke="#2c46a8" stroke-width="1.2"><path d="M5.700 2.100C3 3.600 1.700 5.600 1.700 7.900c0 2.100 1.200 4.100 3.700 5.700"/><path d="M1.900 14h4.100v-3.700"/><path d="M10.100 13.500c2.900-1.500 4.300-3.500 4.300-5.700 0-2.200-1.200-4.100-3.600-5.700"/><path d="M14.200 2h-3.800v3.600"/></g></svg><svg class="abs" style="left:1535px;top:607px" width="18" height="16" viewBox="0 0 18 16"><g fill="none" stroke="#2c46a8" stroke-width="1.2"><path d="M2.900 8.700a6.300 6.300 0 1 0 1.900-5.200"/><path d="M2.700 1.800v3.500h3.200"/><path d="M9.200 4.300v3.600l3 2.700"/></g></svg><svg class="abs" style="left:1577.7px;top:609.6px" width="3" height="13" viewBox="0 0 3 13"><g fill="#2c46a8"><rect x=".1" y="0" width="2.500" height="2.500" rx=".6"/><rect x=".1" y="4.900" width="2.500" height="2.500" rx=".6"/><rect x=".1" y="9.800" width="2.500" height="2.500" rx=".6"/></g></svg>
<div class="cb" style="left:25px;top:657.8px"></div><div class="t td" style="left:57px;top:655.9px">78</div><div class="t td" style="left:183px;top:655.9px">Mac Book Pro</div><div class="t td" style="left:334px;top:655.9px">Tecnología UpSelling</div><div class="t td" style="left:598px;top:655.9px">Apple</div><div class="bd" style="left:834px;top:653.5px;width:70px;background:#dbe2f8;color:#2f4daa">Asignado</div><div class="t td" style="left:1011px;top:655.9px;color:#3450a8;font-size:13.7px">Alamos, Florencia</div><div class="t td" style="left:1316px;top:655.9px">M</div><svg class="abs" style="left:1502px;top:658px" width="16" height="16" viewBox="0 0 16 16"><g fill="none" stroke="#2c46a8" stroke-width="1.2"><path d="M5.700 2.100C3 3.600 1.700 5.600 1.700 7.900c0 2.100 1.200 4.100 3.700 5.700"/><path d="M1.900 14h4.100v-3.700"/><path d="M10.100 13.500c2.900-1.500 4.300-3.500 4.300-5.700 0-2.200-1.200-4.100-3.600-5.700"/><path d="M14.200 2h-3.800v3.600"/></g></svg><svg class="abs" style="left:1535px;top:658px" width="18" height="16" viewBox="0 0 18 16"><g fill="none" stroke="#2c46a8" stroke-width="1.2"><path d="M2.900 8.700a6.300 6.300 0 1 0 1.900-5.200"/><path d="M2.700 1.800v3.500h3.200"/><path d="M9.200 4.300v3.600l3 2.700"/></g></svg><svg class="abs" style="left:1577.7px;top:660.6px" width="3" height="13" viewBox="0 0 3 13"><g fill="#2c46a8"><rect x=".1" y="0" width="2.500" height="2.500" rx=".6"/><rect x=".1" y="4.900" width="2.500" height="2.500" rx=".6"/><rect x=".1" y="9.800" width="2.500" height="2.500" rx=".6"/></g></svg>
<div class="cb" style="left:25px;top:708.8px"></div><div class="t td" style="left:57px;top:706.9px">79</div><div class="t td" style="left:183px;top:706.9px">Mac Book Pro</div><div class="t td" style="left:334px;top:706.9px">Tecnología UpSelling</div><div class="t td" style="left:598px;top:706.9px">Apple</div><div class="bd" style="left:834px;top:704.5px;width:76px;background:#c5eba0;color:#1d2d12">Disponible</div><div class="t td" style="left:1316px;top:706.9px">M</div><svg class="abs" style="left:1502px;top:709px" width="16" height="16" viewBox="0 0 16 16"><g fill="none" stroke="#2c46a8" stroke-width="1.2"><path d="M5.700 2.100C3 3.600 1.700 5.600 1.700 7.900c0 2.100 1.200 4.100 3.700 5.700"/><path d="M1.900 14h4.100v-3.700"/><path d="M10.100 13.500c2.900-1.500 4.300-3.500 4.300-5.700 0-2.200-1.200-4.100-3.600-5.700"/><path d="M14.200 2h-3.800v3.600"/></g></svg><svg class="abs" style="left:1535px;top:709px" width="18" height="16" viewBox="0 0 18 16"><g fill="none" stroke="#2c46a8" stroke-width="1.2"><path d="M2.900 8.700a6.300 6.300 0 1 0 1.900-5.200"/><path d="M2.700 1.800v3.500h3.200"/><path d="M9.200 4.300v3.600l3 2.700"/></g></svg><svg class="abs" style="left:1577.7px;top:711.6px" width="3" height="13" viewBox="0 0 3 13"><g fill="#2c46a8"><rect x=".1" y="0" width="2.500" height="2.500" rx=".6"/><rect x=".1" y="4.900" width="2.500" height="2.500" rx=".6"/><rect x=".1" y="9.800" width="2.500" height="2.500" rx=".6"/></g></svg>
<div class="cb" style="left:25px;top:759.8px"></div><div class="t td" style="left:57px;top:757.9px">80</div><div class="t td" style="left:183px;top:757.9px">Mac Book Pro</div><div class="t td" style="left:334px;top:757.9px">Tecnología UpSelling</div><div class="t td" style="left:598px;top:757.9px">Apple</div><div class="bd" style="left:834px;top:755.5px;width:70px;background:#dbe2f8;color:#2f4daa">Asignado</div><div class="t td" style="left:1011px;top:757.9px;color:#3450a8;font-size:13.7px">Alamos, Florencia</div><div class="t td" style="left:1316px;top:757.9px">M</div><svg class="abs" style="left:1502px;top:760px" width="16" height="16" viewBox="0 0 16 16"><g fill="none" stroke="#2c46a8" stroke-width="1.2"><path d="M5.700 2.100C3 3.600 1.700 5.600 1.700 7.900c0 2.100 1.200 4.100 3.700 5.700"/><path d="M1.900 14h4.100v-3.700"/><path d="M10.100 13.500c2.900-1.500 4.300-3.500 4.300-5.700 0-2.200-1.200-4.100-3.600-5.700"/><path d="M14.200 2h-3.800v3.600"/></g></svg><svg class="abs" style="left:1535px;top:760px" width="18" height="16" viewBox="0 0 18 16"><g fill="none" stroke="#2c46a8" stroke-width="1.2"><path d="M2.900 8.700a6.300 6.300 0 1 0 1.900-5.200"/><path d="M2.700 1.800v3.500h3.200"/><path d="M9.200 4.300v3.600l3 2.700"/></g></svg><svg class="abs" style="left:1577.7px;top:762.6px" width="3" height="13" viewBox="0 0 3 13"><g fill="#2c46a8"><rect x=".1" y="0" width="2.500" height="2.500" rx=".6"/><rect x=".1" y="4.900" width="2.500" height="2.500" rx=".6"/><rect x=".1" y="9.800" width="2.500" height="2.500" rx=".6"/></g></svg>
<div class="cb" style="left:25px;top:810.8px"></div><div class="t td" style="left:57px;top:808.9px">81</div><div class="t td" style="left:183px;top:808.9px">Mac Book Pro</div><div class="t td" style="left:334px;top:808.9px">Tecnología UpSelling</div><div class="t td" style="left:598px;top:808.9px">Apple</div><div class="bd" style="left:834px;top:806.5px;width:70px;background:#dbe2f8;color:#2f4daa">Asignado</div><div class="t td" style="left:1011px;top:808.9px;color:#3450a8;font-size:13.7px">Alamos, Florencia</div><div class="t td" style="left:1316px;top:808.9px">M</div><svg class="abs" style="left:1502px;top:811px" width="16" height="16" viewBox="0 0 16 16"><g fill="none" stroke="#2c46a8" stroke-width="1.2"><path d="M5.700 2.100C3 3.600 1.700 5.600 1.700 7.900c0 2.100 1.200 4.100 3.700 5.700"/><path d="M1.900 14h4.100v-3.700"/><path d="M10.100 13.500c2.900-1.500 4.300-3.500 4.300-5.700 0-2.200-1.200-4.100-3.600-5.700"/><path d="M14.200 2h-3.800v3.600"/></g></svg><svg class="abs" style="left:1535px;top:811px" width="18" height="16" viewBox="0 0 18 16"><g fill="none" stroke="#2c46a8" stroke-width="1.2"><path d="M2.900 8.700a6.300 6.300 0 1 0 1.900-5.200"/><path d="M2.700 1.800v3.500h3.200"/><path d="M9.200 4.300v3.600l3 2.700"/></g></svg><svg class="abs" style="left:1577.7px;top:813.6px" width="3" height="13" viewBox="0 0 3 13"><g fill="#2c46a8"><rect x=".1" y="0" width="2.500" height="2.500" rx=".6"/><rect x=".1" y="4.900" width="2.500" height="2.500" rx=".6"/><rect x=".1" y="9.800" width="2.500" height="2.500" rx=".6"/></g></svg>
</div>
<div class="abs" style="left:1783px;top:842px;width:50px;height:50px;border-radius:25px;background:#2f4daa;box-shadow:0 1px 5px rgba(47,77,170,.28);z-index:40"></div>
<svg class="abs" style="left:1795px;top:857px;z-index:41" width="26" height="22" viewBox="0 0 26 22" fill="#fff"><rect x="2.900" y="3.700" width="20.300" height="10.400" rx="5.200"/><path d="M14.800 15.600h4.200v4.200z"/></svg>
<div class="abs" style="left:1835px;top:842px;width:67px;height:57px;z-index:39;border-radius:30px 0 0 0;background:radial-gradient(ellipse at 60% 70%,rgba(238,240,245,.9) 0,rgba(238,240,245,.6) 50%,rgba(238,240,245,0) 75%)"></div>
<div class="abs" style="left:1845px;top:852px;width:40px;height:40px;overflow:hidden;z-index:40"><div class="abs" style="left:0;top:0;width:52px;height:52px;border-radius:26px;background:#0d2754"></div>
<svg class="abs" style="left:12px;top:11px" width="16" height="18" viewBox="0 0 16 18" fill="#fff"><path d="M3 .800h10.200c1 0 1.800.8 1.800 1.800V16.900l-2.200-1.600H3c-1 0-1.800-.8-1.800-1.800V2.600C1.200 1.600 2 .800 3 .800z"/><path d="M3.800 10.600c2.600 1.500 6 1.500 8.600 0" fill="none" stroke="#0d2754" stroke-width="1" stroke-linecap="round"/></svg></div>
<div class="abs" style="left:1885px;top:868px;width:8px;height:8px;border-radius:4px;background:#c0391b;z-index:41"></div>
<svg class="abs" style="left:355px;top:599px;z-index:50" width="14" height="21" viewBox="0 0 14 21"><path d="M1.500 1.200v15.300l3.600-3.400 2.500 5.900 2-.9-2.500-5.700h4.900z" fill="#fff" stroke="#1a1a1a" stroke-width="1.100" stroke-linejoin="round"/></svg>
</body>
</html>
